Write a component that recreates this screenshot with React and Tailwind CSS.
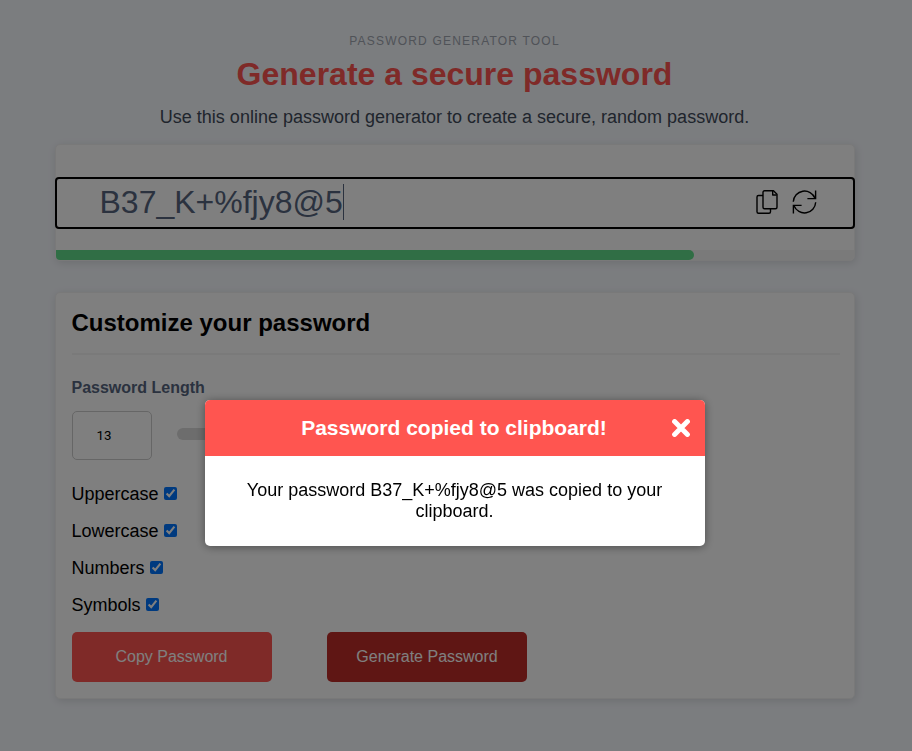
function CopyIcon() {
  return (
    <svg width="23" height="24" viewBox="0 0 23 24" fill="none" stroke="#000" strokeWidth="1.4" strokeLinejoin="round">
      <path d="M7 5.5H2.5A1.5 1.5 0 0 0 1 7v14.8a1.5 1.5 0 0 0 1.5 1.5H13a1.5 1.5 0 0 0 1.5-1.5v-3.3" />
      <path d="M8.5 .7h9L21 4.2v13a1.5 1.5 0 0 1-1.5 1.5h-11A1.5 1.5 0 0 1 7 17.2v-15A1.5 1.5 0 0 1 8.5 .7Z" />
      <path d="M16.7 1v4h4" />
    </svg>
  );
}

function SyncIcon() {
  return (
    <svg width="25" height="24" viewBox="0 0 25 24" fill="none" stroke="#000" strokeWidth="1.4">
      <path d="M1.3 11.7A11.25 11.25 0 0 1 23 8.2" />
      <path d="M23.6 .4v8.2h-8.2" />
      <path d="M23.7 12.3A11.25 11.25 0 0 1 2 15.8" />
      <path d="M1.4 23.6v-8.2h8.2" />
    </svg>
  );
}

function CloseIcon() {
  return (
    <svg width="18" height="18" viewBox="0 0 18 18" stroke="#fff" strokeWidth="5" strokeLinecap="round" className="mb-px">
      <path d="M2.6 2.6l12.8 12.8M15.4 2.6L2.6 15.4" />
    </svg>
  );
}

const options = ["Uppercase", "Lowercase", "Numbers", "Symbols"];

export default function App() {
  return (
    <div className="h-[751px] w-[912px] overflow-hidden bg-[#f7faff] font-['Liberation_Sans',Arial,sans-serif] text-black">
      <main className="ml-[54.5px] flex w-[800px] flex-col">
        <header className="flex flex-col items-center pt-[32px] text-center">
          <p className="text-[12px] leading-[18px] tracking-[1.2px] text-[#a0a6b0]">PASSWORD GENERATOR TOOL</p>
          <h1 className="mt-[5px] text-[32px] leading-[38px] font-bold text-[#ff5550]">Generate a secure password</h1>
          <p className="mt-[13px] text-[18px] leading-[22px] text-[#414b5a]">
            Use this online password generator to create a secure, random password.
          </p>
        </header>

        <section className="mt-[16px] flex h-[117px] flex-col rounded-[5px] border border-[#f3f3f3] bg-white shadow-[1px_2px_8px_rgba(0,0,0,0.12)]">
          <div className="-mx-px mt-[32px] flex h-[52px] items-center rounded-[4px] border-2 border-black pr-[36px] pb-[2px] pl-[43px]">
            <span className="text-[32px] leading-[36px] text-[#56657f]">B37_K+%fjy8@5</span>
            <span className="h-[36px] w-px bg-[#56657f]" />
            <span className="ml-auto flex items-center gap-[13px]">
              <CopyIcon />
              <SyncIcon />
            </span>
          </div>
          <div className="mt-[21px] h-[10px] overflow-hidden rounded-b-[4px] bg-[#f5f5f5]">
            <div className="h-[10px] w-[638px] rounded-r-[5px] bg-[#60dc8a]" />
          </div>
        </section>

        <section className="mt-[31px] flex h-[407px] flex-col rounded-[5px] border border-[#f3f3f3] bg-white px-[16px] shadow-[1px_2px_8px_rgba(0,0,0,0.12)]">
          <h2 className="mt-[16px] text-[24px] leading-[28px] font-bold">Customize your password</h2>
          <hr className="mt-[16px] -mr-[2px] border-t-2 border-[#f5f5f5]" />
          <h3 className="mt-[23px] text-[16px] leading-[20px] font-bold text-[#56657f]">Password Length</h3>
          <div className="mt-[13px] flex items-center">
            <span className="flex h-[49px] w-[80px] items-center rounded-[5px] border border-[#cccccc] pl-[24px] font-[Roboto,sans-serif] text-[13.33px]">13</span>
            <span className="mt-[-3px] ml-[25px] h-[12px] w-[400px] rounded-[6px] bg-[#dadada]" />
          </div>
          <div className="mt-[16px] flex flex-col">
            {options.map((name) => (
              <label key={name} className="flex h-[37px] items-center text-[18px]">
                {name}
                <input type="checkbox" defaultChecked className="mb-[2px] ml-[5px] h-[13px] w-[13px]" />
              </label>
            ))}
          </div>
          <div className="mt-[8px] flex gap-[55px] text-[16px] text-white">
            <button className="h-[50px] w-[200px] rounded-[5px] bg-[#ff5550]">Copy Password</button>
            <button className="h-[50px] w-[200px] rounded-[5px] bg-[#be2c28] pl-px">Generate Password</button>
          </div>
        </section>
      </main>

      <div className="fixed inset-0 bg-black/50">
        <div
          role="dialog"
          className="mt-[400px] ml-[204.5px] h-[146px] w-[500px] overflow-hidden rounded-[5px] bg-white shadow-[0_1px_10px_rgba(0,0,0,0.4)]"
        >
          <div className="flex h-[56px] items-center bg-[#ff5550] pr-[15px] pl-[32px] text-white">
            <h4 className="flex-1 text-center text-[21px] font-bold">Password copied to clipboard!</h4>
            <CloseIcon />
          </div>
          <p className="px-[30px] pt-[24px] text-center text-[18px] leading-[21px]">
            Your password B37_K+%fjy8@5 was copied to your clipboard.
          </p>
        </div>
      </div>
    </div>
  );
}
